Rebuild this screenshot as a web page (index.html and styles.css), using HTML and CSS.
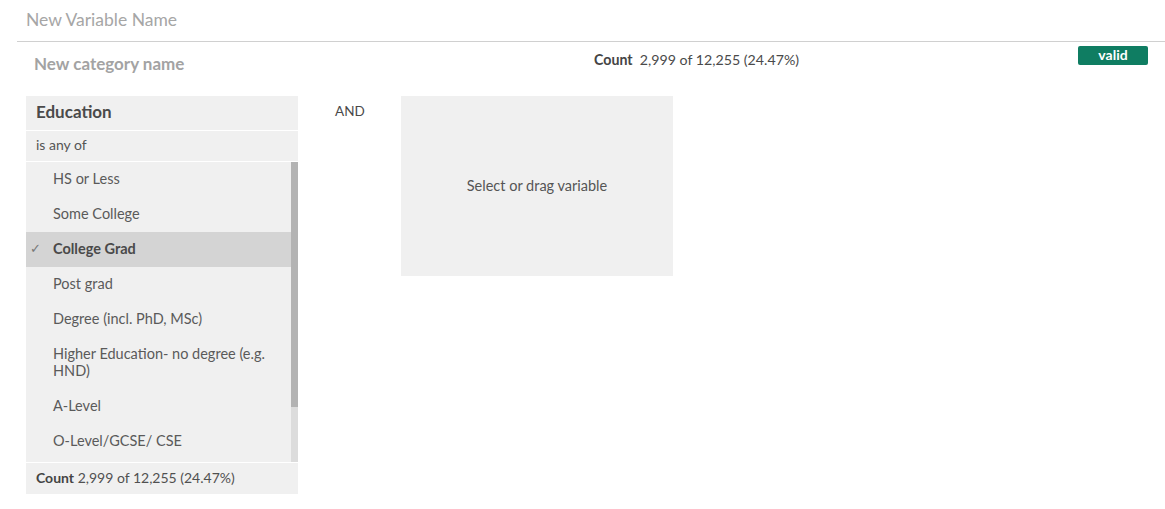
FILE: index.html
```html
<!DOCTYPE html>
<html>
<head>
<meta charset="utf-8">
<link rel="stylesheet" href="styles.css">
</head>
<body>
<div class="title">New Variable Name</div>
<div class="cat-row">
  <div class="cat-name">New category name</div>
  <div class="cat-count"><b>Count</b>&nbsp; 2,999 of 12,255 (24.47%)</div>
  <div class="badge">valid</div>
</div>
<div class="main">
  <div class="panel">
    <div class="panel-head">Education</div>
    <div class="panel-op">is any of</div>
    <div class="list-wrap">
      <div class="list">
        <div class="item">HS or Less</div>
        <div class="item">Some College</div>
        <div class="item selected"><span class="check">✓</span>College Grad</div>
        <div class="item">Post grad</div>
        <div class="item">Degree (incl. PhD, MSc)</div>
        <div class="item">Higher Education- no degree (e.g. HND)</div>
        <div class="item">A-Level</div>
        <div class="item">O-Level/GCSE/ CSE</div>
      </div>
      <div class="scrollbar"><div class="thumb"></div></div>
    </div>
    <div class="panel-foot"><b>Count</b> 2,999 of 12,255 (24.47%)</div>
  </div>
  <div class="and">AND</div>
  <div class="drop">Select or drag variable</div>
</div>
</body>
</html>
```
FILE: styles.css
```css
body {
  margin: 0;
  font-family: Lato, "Noto Sans", sans-serif;
  color: #505050;
  background: #fff;
}
.title {
  height: 41px;
  line-height: 40px;
  padding-left: 26px;
  font-size: 17.5px;
  color: #a6a6a6;
}
.cat-row {
  margin-left: 17px;
  border-top: 1px solid #d0d0d0;
  height: 54px;
  display: flex;
  align-items: flex-start;
}
.cat-name {
  width: 560px;
  padding-left: 17px;
  padding-top: 11px;
  font-size: 17px;
  font-weight: bold;
  color: #a3a3a3;
}
.cat-count {
  width: 484px;
  padding-top: 9px;
  font-size: 14.2px;
  color: #4a4a4a;
}
.cat-count b {
  color: #444;
}
.badge {
  margin-top: 4px;
  width: 70px;
  height: 19px;
  line-height: 17px;
  background: #0f7d62;
  color: #fff;
  font-weight: bold;
  font-size: 14px;
  text-align: center;
  border-radius: 2px;
}
.main {
  display: flex;
  align-items: flex-start;
  padding-left: 26px;
}
.panel {
  width: 272px;
  background: #f0f0f0;
}
.panel-head {
  height: 34px;
  line-height: 31px;
  padding-left: 10px;
  font-size: 17px;
  font-weight: bold;
  color: #4a4a4a;
  border-bottom: 1px solid #fff;
}
.panel-op {
  height: 30px;
  line-height: 28px;
  padding-left: 10px;
  font-size: 14px;
  color: #555;
  border-bottom: 1px solid #fff;
}
.list-wrap {
  display: flex;
  height: 300px;
}
.list {
  flex: 1;
  overflow: hidden;
}
.scrollbar {
  width: 7px;
  background: #dcdcdc;
}
.thumb {
  height: 245px;
  background: #b3b3b3;
}
.item {
  padding: 8px 10px 10px 27px;
  line-height: 17px;
  font-size: 14.5px;
  color: #5a5a5a;
  position: relative;
}
.item.selected {
  background: #d4d4d4;
  font-weight: bold;
  color: #4a4a4a;
}
.check {
  position: absolute;
  left: 4px;
  font-weight: normal;
  font-size: 13px;
  color: #777;
}
.panel-foot {
  border-top: 1px solid #fff;
  height: 31px;
  line-height: 30px;
  padding-left: 10px;
  font-size: 14px;
  color: #505050;
}
.panel-foot b {
  color: #444;
}
.and {
  width: 103px;
  box-sizing: border-box;
  padding-left: 37px;
  padding-top: 7px;
  font-size: 13.5px;
  color: #4a4a4a;
}
.drop {
  width: 272px;
  height: 180px;
  background: #f0f0f0;
  display: flex;
  align-items: center;
  justify-content: center;
  font-size: 14.5px;
  color: #555;
  padding-bottom: 2px;
  box-sizing: border-box;
}
```
